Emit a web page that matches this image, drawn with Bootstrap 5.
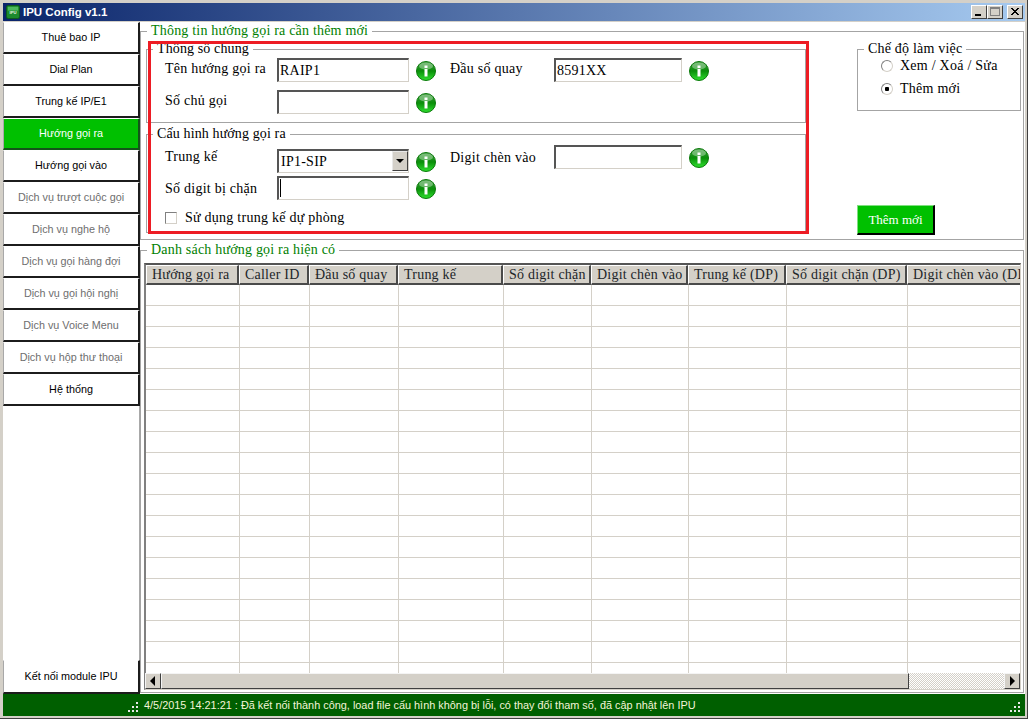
<!DOCTYPE html>
<html lang="vi">
<head>
  <meta charset="UTF-8">
  <title>IPU Config v1.1</title>
  <link href="https://cdn.jsdelivr.net/npm/bootstrap@5.3.0/dist/css/bootstrap.min.css" rel="stylesheet">
  <style>
    html, body { margin: 0; height: 719px; overflow: hidden; background: #d4d0c8; }
    .ipu-win { width: 1028px; height: 719px; padding: 3px 2px 2px 3px; background: #d4d0c8; border-right: 1px solid #404040; border-bottom: 1px solid #404040; color: #000; font: 14px/18px "Liberation Serif", serif; letter-spacing: .25px; }
    .ipu-title { height: 18px; background: linear-gradient(90deg, #0a246a, #a6caf0); color: #fff; font: bold 11.5px/18px "Liberation Sans", sans-serif; letter-spacing: 0; padding: 0 2px 0 3px; }
    .ipu-logo { margin-right: 3px; }
    .ipu-capbtn { width: 16px; height: 14px; background: #d4d0c8; border: 1px solid; border-color: #fff #404040 #404040 #fff; padding: 0; }
    .ipu-client { height: 673px; background: #fff; margin-top: 1px; }
    .ipu-side { width: 137px; flex: none; border-right: 1px solid #a8a8a8; }
    .ipu-tab { width: 137px; height: 32px; border-radius: 0; border: 0; border-top: 1px solid #fff; border-left: 1px solid #a8a8a8; border-right: 2px solid #1c1c1c; border-bottom: 2px solid #1c1c1c; background: #fff; color: #000; font: 10.8px/1 "Liberation Sans", sans-serif; padding: 0; }
    .ipu-tab-off { color: #6e6e6e; }
    .ipu-tab-on { background: #00c000; color: #fff; border-bottom-color: #14531a; border-right-color: #14531a; }
    .ipu-tab-end { height: 34px; }
    .ipu-main { padding-right: 1px; min-width: 0; }
    .ipu-group { border: 1px solid #a4a4a4; padding: 0; margin: 0; min-width: 0; }
    .ipu-group > legend { float: none; width: auto; font: 14px/18px "Liberation Serif", serif; letter-spacing: .2px; margin: 0 0 0 6px; padding: 0 4px; }
    .ipu-green > legend { color: #008000; }
    .ipu-top { height: 218px; position: relative; }
    .ipu-mark { position: absolute; left: 7px; top: 1px; width: 661px; height: 193px; border: 3px solid #ed1c24; pointer-events: none; }
    .ipu-left { width: 660px; margin-left: 5px; }
    .ipu-left .ipu-group > legend { margin-left: 6px; letter-spacing: .12px; }
    .ipu-right { width: 164px; margin-left: 51px; }
    .ipu-box1 { height: 83px; }
    .ipu-box2 { height: 108px; margin-top: 2px; }
    .ipu-pad-l { padding-left: 18px; width: 303px; flex: none; }
    .ipu-pad-top { padding-top: 6px; }
    .ipu-lbl { width: 112px; flex: none; padding-top: 2px; }
    .ipu-lbl2 { width: 104px; flex: none; padding-top: 2px; }
    .ipu-up { padding-top: 0; margin-top: -1px; }
    .ipu-low { padding-top: 4px; }
    .ipu-input { width: 132px; height: 24px; flex: none; border-radius: 0; border: 1px solid #d4d0c8; border-top: 2px solid #555; border-left: 2px solid #555; padding: 0 0 0 1px; font: 14px/20px "Liberation Serif", serif; letter-spacing: .25px; color: #000; background-color: #fff; }
    .ipu-input:focus { box-shadow: none; border-color: #555 #d4d0c8 #d4d0c8 #555; }
    .ipu-w128 { width: 128px; }
    .ipu-caret { background: linear-gradient(#000, #000) no-repeat 1px 1px / 1px 18px; }
    .ipu-select { appearance: none; border: 0; outline: 0; background: #fff; flex: 1; min-width: 0; padding: 0 0 0 1px; font: 14px/20px "Liberation Serif", serif; letter-spacing: .25px; height: 100%; }
    .ipu-drop { width: 16px; height: 20px; margin: 0; background: #d4d0c8; border: 1px solid; border-color: #e8e8e8 #404040 #404040 #e8e8e8; }
    .ipu-drop::after { content: ""; border: 4px solid transparent; border-top: 4px solid #000; border-bottom: 0; }
    .ipu-info { width: 20px; height: 20px; flex: none; margin: 3px 0 0 7px; }
    .ipu-check, .ipu-radio { appearance: none; width: 12px; height: 12px; flex: none; margin: 0; background-color: #fff; border: 1px solid; border-color: #808080 #d4d0c8 #d4d0c8 #808080; }
    .ipu-radio { border-radius: 50%; }
    .ipu-radio:checked { background: radial-gradient(circle, #000 0 2px, #fff 2.5px); }
    .ipu-mode { height: 71px; margin-top: 0; }
    .ipu-mode-in { margin-top: -1px; padding-left: 23px; }
    .ipu-mode-gap { gap: 7px; }
    .ipu-mode2 { margin-top: 5px; }
    .ipu-add { width: 78px; height: 30px; margin-top: 94px; border-radius: 0; padding: 0; border: 1px solid; border-color: #7fe07f #000 #000 #7fe07f; border-width: 1px 2px 2px 1px; background: #00c000; color: #fff; font: 13px/1 "Liberation Serif", serif; }
    .ipu-bottom { height: 452px; margin-top: 1px; }
    .ipu-gridwrap { margin: 4px 2px 2px 3px; height: 427px; border: 1px solid #d4d0c8; border-top: 2px solid #555; border-left: 2px solid #808080; }
    .ipu-scroller { overflow: hidden; min-height: 0; }
    .ipu-grid { width: 891px; table-layout: fixed; margin: 0; border-collapse: separate; border-spacing: 0; }
    .ipu-grid th { height: 20px; padding: 0 0 0 5px; background: #d4d0c8; font-weight: 400; font-size: 14px; line-height: 16px; letter-spacing: .22px; white-space: nowrap; overflow: hidden; border: 0; border-top: 1px solid #fff; border-left: 1px solid #fff; border-right: 2px solid #4a4a4a; border-bottom: 2px solid #4a4a4a; }
    .ipu-grid td { height: 21px; padding: 0; border: 0; border-left: 1px solid #d4d0c8; border-bottom: 1px solid #d4d0c8; }
    .ipu-grid td:first-child { border-left: 0; }
    .ipu-sbar { height: 16px; flex: none; margin-left: -1px; }
    .ipu-sbtn { width: 16px; flex: none; background: #d4d0c8; border: 1px solid; border-color: #f4f4f4 #404040 #404040 #f4f4f4; }
    .ipu-sthumb { width: 748px; flex: none; background: #d4d0c8; border: 1px solid; border-color: #f4f4f4 #404040 #404040 #f4f4f4; }
    .ipu-strack { background: repeating-conic-gradient(#d4d0c8 0 25%, #fff 0 50%) 0 0 / 2px 2px; }
    .ipu-status { height: 22px; margin-top: 0; background: #005f00; color: #f4f4d8; font: 10.9px/22px "Liberation Sans", sans-serif; letter-spacing: 0; }
    .ipu-status-l { width: 136px; flex: none; }
    .ipu-status-txt { margin-left: 5px; }
    .ipu-grip { width: 11px; height: 11px; flex: none; margin-top: 8px; }
    .ipu-row4 { margin-top: 3px; }
    .ipu-chk { margin: 9px 0 0; }
    .ipu-row-digit { margin-top: 2px; }
  </style>
</head>
<body>
  <svg width="0" height="0" class="d-block">
    <defs>
      <linearGradient id="ipuGreen" x1="0" y1="0" x2="0" y2="1">
        <stop offset="0" stop-color="#3b9a3b"/>
        <stop offset=".5" stop-color="#0a8f0a"/>
        <stop offset="1" stop-color="#2fe02f"/>
      </linearGradient>
      <symbol id="ipuInfo" viewBox="0 0 20 20">
        <circle cx="10" cy="10" r="9.5" fill="url(#ipuGreen)" stroke="#0b7a0b" stroke-width="1"/>
        <ellipse cx="10" cy="5" rx="7" ry="3.6" fill="#fff" opacity=".35"/>
        <rect x="8.5" y="4.5" width="3" height="2.5" fill="#fff"/>
        <rect x="8.5" y="8" width="3" height="7.5" fill="#fff"/>
      </symbol>
      <symbol id="ipuGrip" viewBox="0 0 11 11">
        <g fill="#e8e8e8">
          <rect x="8" y="0" width="2" height="2"/>
          <rect x="4" y="4" width="2" height="2"/><rect x="8" y="4" width="2" height="2"/>
          <rect x="0" y="8" width="2" height="2"/><rect x="4" y="8" width="2" height="2"/><rect x="8" y="8" width="2" height="2"/>
        </g>
      </symbol>
    </defs>
  </svg>

  <div class="ipu-win d-flex flex-column">
    <div class="ipu-title d-flex align-items-center">
      <svg width="14" height="14" viewBox="0 0 15 15" class="ipu-logo">
        <rect x=".5" y=".5" width="14" height="14" rx="2" fill="#1c8a2c" stroke="#0d5a18"/>
        <rect x="2" y="2" width="11" height="4" fill="#4cb85c"/>
        <text x="7.5" y="9.5" font-size="4.5" text-anchor="middle" fill="#e8f5e8" font-family="Liberation Sans">IPU</text>
      </svg>
      <span>IPU Config v1.1</span>
      <div class="ms-auto d-flex">
        <div class="ipu-capbtn d-flex">
          <svg width="14" height="12" viewBox="0 0 14 12"><rect x="3" y="8" width="6" height="2"/></svg>
        </div>
        <div class="ipu-capbtn d-flex">
          <svg width="14" height="12" viewBox="0 0 14 12"><rect x="2.5" y="1.5" width="9" height="8" fill="none" stroke="#808080"/><rect x="2" y="1" width="10" height="2" fill="#808080"/></svg>
        </div>
        <div class="ipu-capbtn d-flex ms-1">
          <svg width="14" height="12" viewBox="0 0 14 12"><path d="M3 2l7 7M4 2l7 7M10 2L3 9M11 2L4 9" stroke="#000" fill="none"/></svg>
        </div>
      </div>
    </div>

    <div class="ipu-client d-flex">
      <div class="ipu-side d-flex flex-column">
        <button class="btn ipu-tab">Thuê bao IP</button>
        <button class="btn ipu-tab">Dial Plan</button>
        <button class="btn ipu-tab">Trung kế IP/E1</button>
        <button class="btn ipu-tab ipu-tab-on">Hướng gọi ra</button>
        <button class="btn ipu-tab">Hướng gọi vào</button>
        <button class="btn ipu-tab ipu-tab-off">Dịch vụ trượt cuộc gọi</button>
        <button class="btn ipu-tab ipu-tab-off">Dịch vụ nghe hộ</button>
        <button class="btn ipu-tab ipu-tab-off">Dịch vụ gọi hàng đợi</button>
        <button class="btn ipu-tab ipu-tab-off">Dịch vụ gọi hội nghị</button>
        <button class="btn ipu-tab ipu-tab-off">Dịch vụ Voice Menu</button>
        <button class="btn ipu-tab ipu-tab-off">Dịch vụ hộp thư thoại</button>
        <button class="btn ipu-tab">Hệ thống</button>
        <button class="btn ipu-tab ipu-tab-end mt-auto">Kết nối module IPU</button>
      </div>

      <div class="ipu-main flex-fill d-flex flex-column">
        <fieldset class="ipu-group ipu-green ipu-top">
          <legend>Thông tin hướng gọi ra cần thêm mới</legend>
          <div class="d-flex">
            <div class="ipu-left">
              <fieldset class="ipu-group ipu-box1">
                <legend>Thông số chung</legend>
                <div class="d-flex">
                  <div class="ipu-pad-l d-flex flex-column">
                    <div class="d-flex">
                      <span class="ipu-lbl">Tên hướng gọi ra</span>
                      <input class="form-control ipu-input" value="RAIP1">
                      <svg class="ipu-info"><use href="#ipuInfo"/></svg>
                    </div>
                    <div class="d-flex mt-2">
                      <span class="ipu-lbl">Số chủ gọi</span>
                      <input class="form-control ipu-input">
                      <svg class="ipu-info"><use href="#ipuInfo"/></svg>
                    </div>
                  </div>
                  <div class="d-flex">
                    <span class="ipu-lbl2">Đầu số quay</span>
                    <input class="form-control ipu-input ipu-w128" value="8591XX">
                    <svg class="ipu-info"><use href="#ipuInfo"/></svg>
                  </div>
                </div>
              </fieldset>
              <fieldset class="ipu-group ipu-box2">
                <legend>Cấu hình hướng gọi ra</legend>
                <div class="d-flex">
                  <div class="ipu-pad-l ipu-pad-top">
                    <div class="d-flex">
                      <span class="ipu-lbl ipu-up">Trung kế</span>
                      <div class="ipu-input d-flex">
                        <select class="ipu-select"><option>IP1-SIP</option></select>
                        <span class="ipu-drop d-flex align-items-center justify-content-center"></span>
                      </div>
                      <svg class="ipu-info"><use href="#ipuInfo"/></svg>
                    </div>
                    <div class="d-flex ipu-row4">
                      <span class="ipu-lbl ipu-low">Số digit bị chặn</span>
                      <input class="form-control ipu-input ipu-caret">
                      <svg class="ipu-info"><use href="#ipuInfo"/></svg>
                    </div>
                    <label class="d-flex align-items-center ipu-chk">
                      <input type="checkbox" class="ipu-check">
                      <span class="ms-2">Sử dụng trung kế dự phòng</span>
                    </label>
                  </div>
                  <div class="d-flex ipu-row-digit">
                    <span class="ipu-lbl2 ipu-low">Digit chèn vào</span>
                    <input class="form-control ipu-input ipu-w128">
                    <svg class="ipu-info"><use href="#ipuInfo"/></svg>
                  </div>
                </div>
              </fieldset>
            </div>
            <div class="ipu-right">
              <fieldset class="ipu-group ipu-mode">
                <legend>Chế độ làm việc</legend>
                <div class="ipu-mode-in">
                  <label class="d-flex align-items-center ipu-mode-gap"><input type="radio" name="mode" class="ipu-radio"> Xem / Xoá / Sửa</label>
                  <label class="d-flex align-items-center ipu-mode-gap ipu-mode2"><input type="radio" name="mode" class="ipu-radio" checked> Thêm mới</label>
                </div>
              </fieldset>
              <button class="btn ipu-add">Thêm mới</button>
            </div>
          </div>
          <div class="ipu-mark"></div>
        </fieldset>

        <fieldset class="ipu-group ipu-green ipu-bottom">
          <legend>Danh sách hướng gọi ra hiện có</legend>
          <div class="ipu-gridwrap d-flex flex-column">
            <div class="ipu-scroller flex-fill">
              <table class="table ipu-grid">
                <colgroup>
                  <col style="width:93px"><col style="width:70px"><col style="width:89px"><col style="width:105px"><col style="width:88px"><col style="width:97px"><col style="width:98px"><col style="width:121px"><col style="width:130px">
                </colgroup>
                <thead>
                  <tr>
                    <th>Hướng gọi ra</th><th>Caller ID</th><th>Đầu số quay</th><th>Trung kế</th><th>Số digit chặn</th><th>Digit chèn vào</th><th>Trung kế (DP)</th><th>Số digit chặn (DP)</th><th>Digit chèn vào (DP)</th>
                  </tr>
                </thead>
                <tbody id="gridBody"></tbody>
              </table>
            </div>
            <div class="ipu-sbar d-flex">
              <div class="ipu-sbtn d-flex align-items-center justify-content-center">
                <svg width="6" height="10" viewBox="0 0 6 10"><path d="M5 0v10L0 5z"/></svg>
              </div>
              <div class="ipu-sthumb"></div>
              <div class="ipu-strack flex-fill"></div>
              <div class="ipu-sbtn d-flex align-items-center justify-content-center">
                <svg width="6" height="10" viewBox="0 0 6 10"><path d="M1 0v10l5-5z"/></svg>
              </div>
            </div>
          </div>
        </fieldset>
      </div>
    </div>

    <div class="ipu-status d-flex">
      <div class="ipu-status-l d-flex justify-content-end"><svg class="ipu-grip"><use href="#ipuGrip"/></svg></div>
      <span class="ipu-status-txt">4/5/2015 14:21:21 : Đã kết nối thành công, load file cấu hình không bị lỗi, có thay đổi tham số, đã cập nhật lên IPU</span>
      <svg class="ipu-grip ms-auto me-1"><use href="#ipuGrip"/></svg>
    </div>
  </div>

  <script>
    let rows = "";
    for (let i = 0; i < 19; i++) {
      rows += "<tr>" + "<td></td>".repeat(9) + "</tr>";
    }
    document.getElementById("gridBody").innerHTML = rows;
  </script>
  <script src="https://cdn.jsdelivr.net/npm/bootstrap@5.3.0/dist/js/bootstrap.bundle.min.js"></script>
</body>
</html>
